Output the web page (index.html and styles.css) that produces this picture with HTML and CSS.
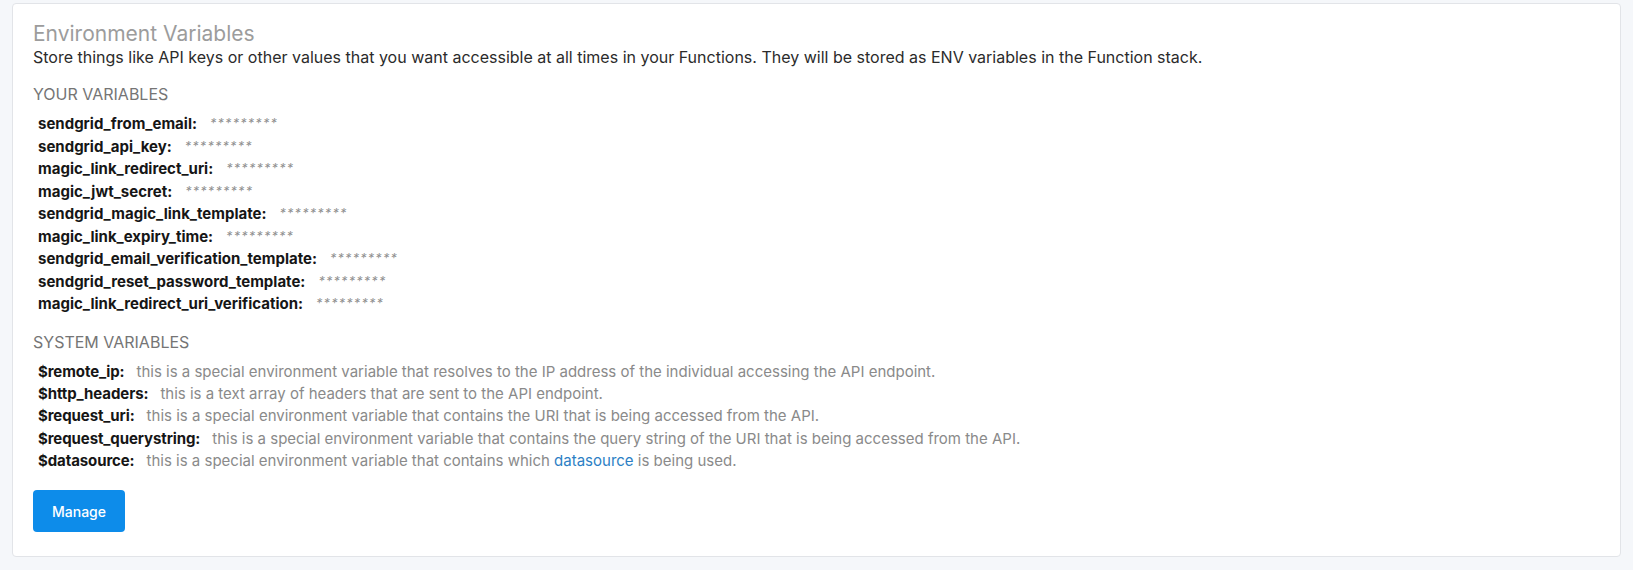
FILE: index.html
```html
<!DOCTYPE html>
<html>
<head>
<meta charset="utf-8">
<link rel="stylesheet" href="styles.css">
</head>
<body>
<div class="page">
  <section class="card">
    <h1 class="title">Environment Variables</h1>
    <p class="desc">Store things like API keys or other values that you want accessible at all times in your Functions. They will be stored as ENV variables in the Function stack.</p>

    <h2 class="section">YOUR VARIABLES</h2>
    <ul class="vars">
      <li><span class="name">sendgrid_from_email:</span><span class="mask">*********</span></li>
      <li><span class="name">sendgrid_api_key:</span><span class="mask">*********</span></li>
      <li><span class="name">magic_link_redirect_uri:</span><span class="mask">*********</span></li>
      <li><span class="name">magic_jwt_secret:</span><span class="mask">*********</span></li>
      <li><span class="name">sendgrid_magic_link_template:</span><span class="mask">*********</span></li>
      <li><span class="name">magic_link_expiry_time:</span><span class="mask">*********</span></li>
      <li><span class="name">sendgrid_email_verification_template:</span><span class="mask">*********</span></li>
      <li><span class="name">sendgrid_reset_password_template:</span><span class="mask">*********</span></li>
      <li><span class="name">magic_link_redirect_uri_verification:</span><span class="mask">*********</span></li>
    </ul>

    <h2 class="section">SYSTEM VARIABLES</h2>
    <ul class="sys">
      <li><span class="name">$remote_ip:</span><span class="info">this is a special environment variable that resolves to the IP address of the individual accessing the API endpoint.</span></li>
      <li><span class="name">$http_headers:</span><span class="info">this is a text array of headers that are sent to the API endpoint.</span></li>
      <li><span class="name">$request_uri:</span><span class="info">this is a special environment variable that contains the URI that is being accessed from the API.</span></li>
      <li><span class="name">$request_querystring:</span><span class="info">this is a special environment variable that contains the query string of the URI that is being accessed from the API.</span></li>
      <li><span class="name">$datasource:</span><span class="info">this is a special environment variable that contains which <a class="link" href="#">datasource</a> is being used.</span></li>
    </ul>

    <button class="btn" type="button">Manage</button>
  </section>
</div>
</body>
</html>
```

FILE: styles.css
```css
html, body {
  margin: 0;
  padding: 0;
  background: #f5f7fa;
}

body {
  font-family: Inter, "Noto Sans", "Liberation Sans", sans-serif;
  color: #222;
}

.page {
  padding: 3px 12px 13px 12px;
}

.card {
  box-sizing: border-box;
  height: 554px;
  background: #ffffff;
  border: 1px solid #e2e4e8;
  border-radius: 4px;
  padding: 18px 20px 24px 20px;
}

.title {
  margin: 0;
  font-size: 21px;
  line-height: 24px;
  font-weight: 400;
  color: #9c9c9c;
}

.desc {
  margin: 0;
  font-size: 16px;
  line-height: 22px;
  color: #2b2b2b;
}

.section {
  margin: 15px 0 0 0;
  font-size: 16px;
  line-height: 22px;
  font-weight: 400;
  color: #757575;
}

.vars, .sys {
  list-style: none;
  margin: 8px 0 0 0;
  padding: 0 0 0 5px;
}

.vars li {
  display: flex;
  align-items: baseline;
  line-height: 22.5px;
  height: 22.5px;
  white-space: nowrap;
}

.sys li {
  display: flex;
  align-items: baseline;
  line-height: 22.4px;
  height: 22.4px;
  white-space: nowrap;
}

.name {
  font-size: 15px;
  font-weight: 700;
  color: #161616;
}

.vars .name {
  margin-right: 13px;
}

.sys .name {
  margin-right: 12px;
}

.sys .name {
  letter-spacing: -0.1px;
}

.mask {
  font-size: 12.5px;
  font-style: italic;
  letter-spacing: 1.3px;
  color: #8f8f8f;
  position: relative;
  top: -1px;
}

.info {
  font-size: 15px;
  color: #8a8a8a;
}

.link {
  color: #2c7fc5;
  text-decoration: none;
}

.btn {
  display: block;
  margin-top: 18px;
  width: 92px;
  height: 42px;
  border: none;
  border-radius: 4px;
  background: #0d8cea;
  color: #ffffff;
  font-family: Inter, "Noto Sans", "Liberation Sans", sans-serif;
  font-size: 14px;
  font-weight: 500;
  cursor: pointer;
}
```
